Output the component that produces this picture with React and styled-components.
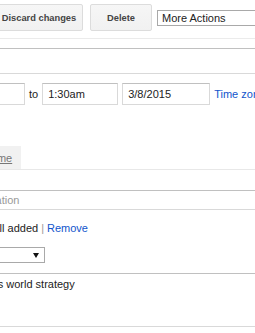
import React from 'react'
import styled, { createGlobalStyle } from 'styled-components'

const GlobalStyle = createGlobalStyle`
  html, body {
    margin: 0;
    padding: 0;
    background: #fff;
    overflow: hidden;
  }
  body {
    font-family: "Liberation Sans", Arial, sans-serif;
    font-size: 11px;
    color: #222;
  }
`

// the screenshot is a crop of a wider edit page, so the page is shifted left
const Page = styled.div`
  width: 640px;
  margin-left: -160px;
  padding-left: 17px;
  box-sizing: border-box;
`

const Toolbar = styled.div`
  display: flex;
  align-items: center;
  padding: 4px 0 7px;
  margin-left: -17px;
  padding-left: 17px;
  border-bottom: 1px solid #ebebeb;
`

const BackLink = styled.a`
  width: 58px;
  margin-right: 8px;
  white-space: nowrap;
  color: #15c;
`

const Button = styled.button`
  box-sizing: border-box;
  height: 27px;
  width: ${p => p.$w}px;
  margin-right: ${p => p.$gap ?? 7}px;
  padding: 0;
  border: 1px solid #dcdcdc;
  border-radius: 2px;
  background: linear-gradient(#f6f6f6, #f1f1f1);
  color: #444;
  font: bold 9.3px "Liberation Sans", Arial, sans-serif;
  cursor: pointer;
`

const ActionSelect = styled.div`
  box-sizing: border-box;
  height: 16px;
  width: 130px;
  padding-left: 4px;
  border: 1px solid #a9a9a9;
  background: #fff;
  line-height: 14px;
  color: #222;
`

const TextInput = styled.div`
  box-sizing: border-box;
  height: ${p => p.$h}px;
  width: ${p => (p.$w ? `${p.$w}px` : 'auto')};
  flex: ${p => (p.$w ? 'none' : '1')};
  padding: 0 ${p => p.$pad ?? 5}px;
  border: 1px solid #d9d9d9;
  border-top-color: #c0c0c0;
  background: #fff;
  display: flex;
  align-items: center;
  white-space: nowrap;
  overflow: hidden;
  color: ${p => (p.$placeholder ? '#999' : '#222')};
`

const TitleRow = styled.div`
  display: flex;
  margin-top: 9px;
`

const DateRow = styled.div`
  display: flex;
  align-items: center;
  gap: 4px;
  margin-top: 9px;
  white-space: nowrap;
`

const Link = styled.a`
  color: #15c;
  text-decoration: none;
  cursor: pointer;
`

const TabBar = styled.div`
  display: flex;
  gap: 4px;
  margin-top: 41px;
  border-bottom: 1px solid #e8e8e8;
`

const Tab = styled.div`
  box-sizing: border-box;
  height: 23px;
  width: ${p => p.$w}px;
  display: flex;
  align-items: center;
  justify-content: center;
  background: ${p => (p.$active ? '#fff' : '#f1f1f1')};
  color: ${p => (p.$active ? '#222' : '#777')};
  text-decoration: ${p => (p.$active ? 'none' : 'underline')};
  white-space: nowrap;
`

const Details = styled.div`
  padding-top: 20px;
`

const Field = styled.div`
  display: grid;
  grid-template-columns: 73px 1fr;
  column-gap: 8px;
  align-items: start;
  margin-top: ${p => p.$mt ?? 0}px;
`

const Label = styled.div`
  text-align: right;
  color: #222;
  white-space: nowrap;
  overflow: hidden;
`

const CallLine = styled.div`
  display: flex;
  align-items: center;
  gap: 3px;
  height: 17px;
  white-space: nowrap;
`

const Pipe = styled.span`
  color: #999;
  margin: 0 3px;
`

const CalendarSelect = styled.div`
  box-sizing: border-box;
  width: 107px;
  height: 16px;
  padding: 0 5px 0 4px;
  border: 1px solid #a9a9a9;
  display: flex;
  align-items: center;
  justify-content: space-between;
`

const Description = styled.div`
  box-sizing: border-box;
  height: 54px;
  padding: 4px;
  border: 1px solid #d9d9d9;
  border-top-color: #c0c0c0;
  line-height: 13px;
  white-space: nowrap;
`

export default function App() {
  return (
    <Page>
      <GlobalStyle />
      <Toolbar>
        <BackLink>« Back</BackLink>
        <Button $w={65}>Save</Button>
        <Button $w={88}>Discard changes</Button>
        <Button $w={62} $gap={5}>Delete</Button>
        <ActionSelect>More Actions</ActionSelect>
      </Toolbar>

      <TitleRow>
        <TextInput $h={26}>Strategy</TextInput>
      </TitleRow>

      <DateRow>
        <TextInput $h={22} $w={88}>3/8/2015</TextInput>
        <TextInput $h={22} $w={76}>12:30am</TextInput>
        <span>to</span>
        <TextInput $h={22} $w={76}>1:30am</TextInput>
        <TextInput $h={22} $w={88}>3/8/2015</TextInput>
        <Link>Time zone</Link>
      </DateRow>

      <TabBar>
        <Tab $w={88} $active>Event details</Tab>
        <Tab $w={72}>Find a time</Tab>
      </TabBar>

      <Details>
        <Field>
          <Label>Where</Label>
          <TextInput $h={20} $pad={4} $placeholder>Enter a location</TextInput>
        </Field>
        <Field $mt={9}>
          <Label>Video call</Label>
          <CallLine>
            <svg width="16" height="12" viewBox="0 0 16 12">
              <rect x="0" y="1" width="11" height="10" rx="2" fill="#5a9e3a" />
              <path d="M11 5 L16 2 L16 10 L11 7 Z" fill="#5a9e3a" />
            </svg>
            <span>
              Video call added<Pipe>|</Pipe>
              <Link>Remove</Link>
            </span>
          </CallLine>
        </Field>
        <Field $mt={11}>
          <Label>Calendar</Label>
          <CalendarSelect>
            <span>Work</span>
            <svg width="6" height="5" viewBox="0 0 6 5">
              <path d="M0 0 H6 L3 5 Z" fill="#111" />
            </svg>
          </CalendarSelect>
        </Field>
        <Field $mt={10}>
          <Label>Description</Label>
          <Description>Plan Acme's world strategy</Description>
        </Field>
      </Details>
    </Page>
  )
}
